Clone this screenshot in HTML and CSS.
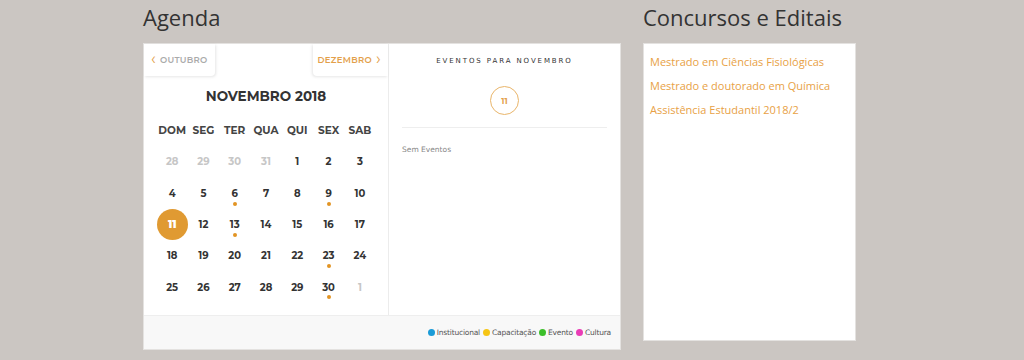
FILE: index.html
```html
<!DOCTYPE html>
<html lang="pt-BR">
<head>
    <meta charset="UTF-8">
    <title>Agenda</title>
    <link rel="stylesheet" href="styles.css">
</head>
<body>
<div class="page">
    <div class="col-agenda">
        <h2 class="title">Agenda</h2>
        <div class="agenda">
            <div class="agenda-main">
                <div class="cal">
                    <div class="cal-nav">
                        <a class="nav-btn prev"><span class="chev">&lsaquo;</span> OUTUBRO</a>
                        <a class="nav-btn next">DEZEMBRO <span class="chev">&rsaquo;</span></a>
                    </div>
                    <div class="cal-month">NOVEMBRO 2018</div>
                    <div class="cal-grid">
                        <span class="wd">DOM</span><span class="wd">SEG</span><span class="wd">TER</span><span class="wd">QUA</span><span class="wd">QUI</span><span class="wd">SEX</span><span class="wd">SAB</span>
                        <span class="day other">28</span><span class="day other">29</span><span class="day other">30</span><span class="day other">31</span><span class="day">1</span><span class="day">2</span><span class="day">3</span>
                        <span class="day">4</span><span class="day">5</span><span class="day ev">6</span><span class="day">7</span><span class="day">8</span><span class="day ev">9</span><span class="day">10</span>
                        <span class="day"><b class="today">11</b></span><span class="day">12</span><span class="day ev">13</span><span class="day">14</span><span class="day">15</span><span class="day">16</span><span class="day">17</span>
                        <span class="day">18</span><span class="day">19</span><span class="day">20</span><span class="day">21</span><span class="day">22</span><span class="day ev">23</span><span class="day">24</span>
                        <span class="day">25</span><span class="day">26</span><span class="day">27</span><span class="day">28</span><span class="day">29</span><span class="day ev">30</span><span class="day other">1</span>
                    </div>
                </div>
                <div class="events">
                    <div class="events-title">EVENTOS PARA NOVEMBRO</div>
                    <div class="events-day">11</div>
                    <div class="events-empty">Sem Eventos</div>
                </div>
            </div>
            <div class="legend">
                <span class="lg"><i class="dot blue"></i>Institucional</span>
                <span class="lg"><i class="dot yellow"></i>Capacitação</span>
                <span class="lg"><i class="dot green"></i>Evento</span>
                <span class="lg"><i class="dot pink"></i>Cultura</span>
            </div>
        </div>
    </div>
    <div class="col-editais">
        <h2 class="title">Concursos e Editais</h2>
        <div class="editais">
            <a href="#">Mestrado em Ciências Fisiológicas</a>
            <a href="#">Mestrado e doutorado em Química</a>
            <a href="#">Assistência Estudantil 2018/2</a>
        </div>
    </div>
</div>
</body>
</html>
```

FILE: styles.css
```css
*{padding: 0px; margin: 0px; box-sizing: border-box}
body {
    background-color: #cbc6c2;
    font-family: "Open Sans", "Liberation Sans", sans-serif;
}
.page {
    display: flex;
    gap: 22px;
    padding-left: 143px;
}
.title {
    font-weight: normal;
    font-size: 22px;
    line-height: 30px;
    color: #333333;
    margin-top: 2px;
    margin-bottom: 11px;
}
.col-agenda {
    width: 478px;
}
.agenda {
    background-color: #ffffff;
    border: 1px solid #e4e2e0;
    height: 307px;
    display: flex;
    flex-direction: column;
}
.agenda-main {
    display: flex;
    height: 271px;
}
.cal {
    width: 245px;
    border-right: 1px solid #ececec;
    font-family: "Montserrat", "Inter", "DejaVu Sans", sans-serif;
}
.cal-nav {
    display: flex;
    justify-content: space-between;
    height: 32px;
}
.nav-btn {
    display: flex;
    align-items: center;
    gap: 4px;
    padding: 0 7px;
    font-size: 8.5px;
    font-weight: 600;
    letter-spacing: 0.3px;
    background: #ffffff;
    box-shadow: 1px 1px 3px rgba(0, 0, 0, .1);
}
.prev {
    color: #aaaaaa;
    border-radius: 0 0 4px 0;
    padding-right: 7px;
}
.next {
    color: #e3a04a;
    border-radius: 0 0 0 4px;
    padding-left: 5px;
    box-shadow: -1px 1px 3px rgba(0, 0, 0, .1);
}
.chev {
    color: #e3a04a;
    font-size: 16px;
    font-weight: normal;
    line-height: 10px;
    margin-top: -2px;
}
.cal-month {
    margin-top: 10px;
    text-align: center;
    font-size: 13.5px;
    font-weight: 700;
    line-height: 20px;
    color: #333333;
}
.cal-grid {
    width: 219px;
    margin: 9px auto 0;
    display: grid;
    grid-template-columns: repeat(7, 1fr);
    grid-auto-rows: 31.3px;
    font-size: 10px;
    font-weight: 700;
    color: #333333;
}
.wd, .day {
    display: flex;
    align-items: center;
    justify-content: center;
    position: relative;
}
.wd {
    font-size: 10.5px;
    color: #444444;
}
.other {
    color: #c6c6c6;
}
.ev::after {
    content: "";
    position: absolute;
    left: 50%;
    top: 24px;
    width: 4px;
    height: 4px;
    margin-left: -2px;
    border-radius: 50%;
    background-color: #e29424;
}
.today {
    width: 31px;
    height: 31px;
    border-radius: 50%;
    background-color: #e09a32;
    color: #ffffff;
    display: flex;
    align-items: center;
    justify-content: center;
}
.events {
    flex: 1;
    display: flex;
    flex-direction: column;
    align-items: center;
    padding: 0 13px;
}
.events-title {
    margin-top: 13px;
    font-size: 7px;
    letter-spacing: 1.9px;
    color: #333333;
    font-family: "DejaVu Sans", sans-serif;
}
.events-day {
    margin-top: 21px;
    width: 29px;
    height: 29px;
    border: 1px solid #e9b56a;
    border-radius: 50%;
    display: flex;
    align-items: center;
    justify-content: center;
    font-size: 8px;
    font-weight: 700;
    color: #e3a04a;
    font-family: "Montserrat", "Inter", sans-serif;
}
.events-empty {
    align-self: stretch;
    margin-top: 12px;
    padding-top: 17px;
    border-top: 1px solid #eeeeee;
    font-size: 7.5px;
    color: #888888;
    font-family: "DejaVu Sans", sans-serif;
}
.legend {
    flex: 1;
    background-color: #f8f8f8;
    border-top: 1px solid #eeeeee;
    display: flex;
    justify-content: flex-end;
    align-items: center;
    gap: 3px;
    padding-right: 9px;
    font-size: 7.5px;
    letter-spacing: -0.2px;
    color: #555555;
    font-family: "DejaVu Sans", sans-serif;
}
.lg {
    display: flex;
    align-items: center;
    gap: 2px;
}
.dot {
    width: 7px;
    height: 7px;
    border-radius: 50%;
}
.blue { background-color: #1b9bd7; }
.yellow { background-color: #f6c514; }
.green { background-color: #3cbf2a; }
.pink { background-color: #e93cb6; }
.col-editais {
    width: 213px;
}
.editais {
    background-color: #ffffff;
    border: 1px solid #e4e2e0;
    height: 298px;
    padding: 6px 6px;
    display: flex;
    flex-direction: column;
}
.editais a {
    text-decoration: none;
    color: #e8a145;
    font-size: 11px;
    line-height: 24px;
}
```
